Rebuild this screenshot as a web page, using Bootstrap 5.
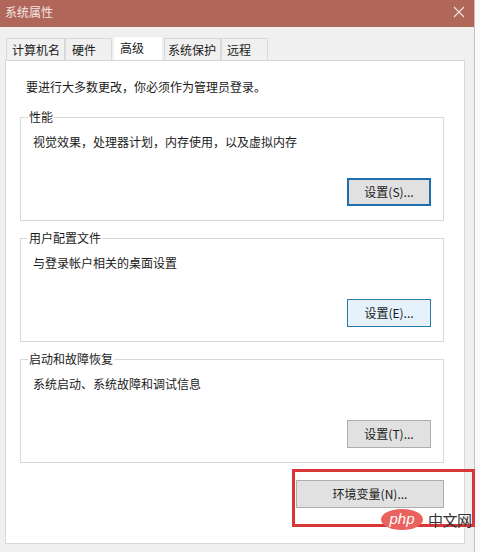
<!DOCTYPE html>
<html lang="zh">
<head>
<meta charset="utf-8">
<title>系统属性</title>
<link href="https://cdn.jsdelivr.net/npm/bootstrap@5.3.0/dist/css/bootstrap.min.css" rel="stylesheet">
<style>
html,body{height:100%}
body{margin:0;width:480px;height:552px;overflow:hidden;background:#fafafa;font-family:"Noto Sans CJK SC","Liberation Sans",sans-serif;font-size:12px;line-height:16px;color:#1a1a1a;position:relative}
.win{width:475px;height:552px;background:#f0f0f0;border-right:1px solid #cdbfc0}
.titlebar{height:27px;flex:none;background:#b0675a;color:#f3e4e0;padding:0 0 4px 5px}
.x-btn{width:14px;height:14px;margin-right:8px}
.tabstrip{height:33px;flex:none;padding:9px 0 0 6px;gap:0;border:0;margin:0;flex-wrap:nowrap}
.tabstrip .nav-link{height:22px;margin:2px 0 0;padding-top:3px;padding-bottom:0;padding-right:0;text-align:left;color:#1a1a1a;background:#f0f0f0;border:1px solid #d9d9d9;border-bottom:0;border-radius:0;font-size:12px;line-height:16px}
.tabstrip .nav-link.active{height:25px;margin:0 1px 0 1px;background:#fff;color:#1a1a1a;border-color:#ececec;border-bottom:0;padding-top:3px;position:relative}
.tabstrip .tw1{width:59px;padding-left:5px}
.tabstrip .tw2{width:47px;padding-left:6px}
.tabstrip .tw3{width:50px;padding-left:6px}
.tabstrip .tw4{width:57px;padding-left:3px}
.tabstrip .tw5{width:47px;padding-left:5px}
.panel{margin-left:5px;width:460px;height:484px;background:#fff;border:1px solid #d9d9d9;padding:0 20px 0 14px;position:relative;flex:none}
.intro{margin:0;padding:18px 0 0 6px;height:48px}
.gbox{display:block;height:112px;margin:0 0 9px;padding:0;border:1px solid #d8d8d8;min-width:0}
.gbox legend{float:none;width:auto;font-size:12px;line-height:16px;margin:0 0 0 7px;padding:0 1px}
.gbox p{margin:0;padding:9px 0 0 12px;height:53px}
.gbox-foot{padding-right:12px}
.wbtn{width:84px;height:28px;padding:0;border-radius:0;font-size:12px;line-height:16px;color:#1a1a1a;background:#e1e1e1;border:1px solid #adadad}
.wbtn:hover{color:#1a1a1a;background:#e1e1e1;border-color:#adadad}
.wbtn-focus{border:2px solid #1f6fae}
.wbtn-focus:hover{border-color:#1f6fae}
.wbtn-hover{background:#e5f1fb;border-color:#2b7ba8}
.wbtn-hover:hover{background:#e5f1fb;border-color:#2b7ba8}
.wbtn-wide{width:148px}
.env-row{padding-top:8px}
.redmark{position:absolute;left:292px;top:469px;width:183px;height:58px;border:3px solid #d9363a}
.wm{position:absolute;left:381px;top:509px;height:21px;gap:5px}
.wm-text{font-size:15px;line-height:20px;color:#333;white-space:nowrap;letter-spacing:-.5px}
.wm-logo{width:42px;height:21px;display:block}
.wm-logo text{font-family:"Liberation Sans",sans-serif;font-style:italic;font-size:15px;fill:#fff}
</style>
</head>
<body>
<div class="win d-flex flex-column">
  <div class="titlebar d-flex align-items-center justify-content-between">
    <span>系统属性</span>
    <svg class="x-btn" viewBox="0 0 14 14" fill="none" stroke="#f3e4e0" stroke-width="1.1"><path d="M2 2l10 10M12 2L2 12"/></svg>
  </div>
  <ul class="nav nav-tabs tabstrip">
    <li class="nav-item"><a class="nav-link tw1" href="#">计算机名</a></li>
    <li class="nav-item"><a class="nav-link tw2" href="#">硬件</a></li>
    <li class="nav-item"><a class="nav-link active tw3" href="#">高级</a></li>
    <li class="nav-item"><a class="nav-link tw4" href="#">系统保护</a></li>
    <li class="nav-item"><a class="nav-link tw5" href="#">远程</a></li>
  </ul>
  <div class="panel">
    <p class="intro">要进行大多数更改，你必须作为管理员登录。</p>
    <fieldset class="gbox">
      <legend>性能</legend>
      <p>视觉效果，处理器计划，内存使用，以及虚拟内存</p>
      <div class="gbox-foot d-flex justify-content-end"><button type="button" class="btn wbtn wbtn-focus">设置(S)...</button></div>
    </fieldset>
    <fieldset class="gbox">
      <legend>用户配置文件</legend>
      <p>与登录帐户相关的桌面设置</p>
      <div class="gbox-foot d-flex justify-content-end"><button type="button" class="btn wbtn wbtn-hover">设置(E)...</button></div>
    </fieldset>
    <fieldset class="gbox">
      <legend>启动和故障恢复</legend>
      <p>系统启动、系统故障和调试信息</p>
      <div class="gbox-foot d-flex justify-content-end"><button type="button" class="btn wbtn">设置(T)...</button></div>
    </fieldset>
    <div class="env-row d-flex justify-content-end"><button type="button" class="btn wbtn wbtn-wide">环境变量(N)...</button></div>
  </div>
</div>
<div class="redmark"></div>
<div class="wm d-flex align-items-center">
  <svg class="wm-logo" viewBox="0 0 42 21"><ellipse cx="21" cy="10.5" rx="21" ry="10.5" fill="#e9625e"/><text x="21" y="15" text-anchor="middle">php</text></svg>
  <span class="wm-text">中文网</span>
</div>
</body>
</html>
